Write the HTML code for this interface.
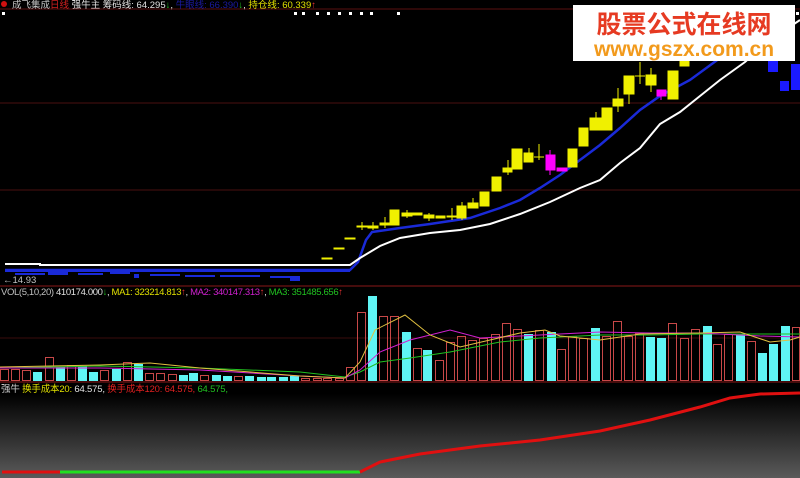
<!DOCTYPE html>
<html><head><meta charset="utf-8"><style>
html,body{margin:0;padding:0;background:#000;width:800px;height:478px;overflow:hidden}
svg{display:block}
text{font-family:"Liberation Sans","Noto Sans CJK SC",sans-serif;font-size:9.5px}
</style></head><body>
<svg width="800" height="478" viewBox="0 0 800 478" xmlns="http://www.w3.org/2000/svg">
<defs><linearGradient id="g" x1="0" y1="0" x2="0" y2="1"><stop offset="0" stop-color="#000"/><stop offset="1" stop-color="#5a5a5a"/></linearGradient></defs>
<rect width="800" height="478" fill="#000"/>
<rect x="0" y="394" width="800" height="84" fill="url(#g)"/>
<line x1="0" y1="9" x2="800" y2="9" stroke="#5a0f0f"/>
<line x1="0" y1="103" x2="800" y2="103" stroke="#4a1010"/>
<line x1="0" y1="190" x2="800" y2="190" stroke="#4a1010"/>
<line x1="0" y1="286" x2="800" y2="286" stroke="#8a1818"/>
<line x1="0" y1="338" x2="800" y2="338" stroke="#3a0c0c"/>
<line x1="0" y1="382" x2="800" y2="382" stroke="#8a1818"/>
<circle cx="4" cy="4" r="3" fill="#d01010"/>
<text x="12" y="8" textLength="304" lengthAdjust="spacing"><tspan fill="#c8c8c8">成飞集成</tspan><tspan fill="#d02020">日线 </tspan><tspan fill="#e0e0e0">强牛主 筹码线: 64.295</tspan><tspan fill="#20c020">↓</tspan><tspan fill="#e0e0e0">, </tspan><tspan fill="#1a1aa0">牛眼线: 66.390</tspan><tspan fill="#20c020">↓</tspan><tspan fill="#e0e0e0">, </tspan><tspan fill="#e0e000">持仓线: 60.339</tspan><tspan fill="#e03030">↑</tspan></text>
<g fill="#fff"><rect x="2" y="12" width="3" height="3"/><rect x="294" y="12" width="3" height="3"/><rect x="302" y="12" width="3" height="3"/><rect x="316" y="12" width="3" height="3"/><rect x="327" y="12" width="3" height="3"/><rect x="338" y="12" width="3" height="3"/><rect x="349" y="12" width="3" height="3"/><rect x="360" y="12" width="3" height="3"/><rect x="370" y="12" width="3" height="3"/><rect x="397" y="12" width="3" height="3"/><rect x="796" y="12" width="3" height="3"/></g>
<g fill="#1a2ad8">
<rect x="5" y="270" width="345" height="2"/>
<rect x="15" y="273" width="30" height="2"/><rect x="48" y="272" width="20" height="3"/><rect x="78" y="273" width="25" height="2"/><rect x="110" y="272" width="20" height="2"/><rect x="134" y="274" width="5" height="4"/><rect x="150" y="274" width="30" height="2"/><rect x="185" y="275" width="30" height="2"/><rect x="220" y="275" width="40" height="2"/><rect x="270" y="276" width="30" height="2"/><rect x="290" y="278" width="10" height="3"/>
</g>
<text x="3" y="283" fill="#c0c0c0" font-size="9">←14.93</text>
<polyline fill="none" stroke="#1a2ad8" stroke-width="2.5" points="5,270 350,270 358,262 366,240 372,232 400,228 430,224 470,218 500,208 520,200 540,188 560,175 580,160 600,145 620,128 640,110 660,96 690,80 720,58 750,38 780,20"/>
<polyline fill="none" stroke="#fff" stroke-width="2" points="5,264 40,264 40,265 350,265 360,258 380,246 400,238 430,233 460,230 490,224 520,214 550,202 580,188 600,180 620,163 640,148 660,124 680,112 700,96 720,80 745,62 770,40 800,20"/>
<g fill="#f0f000" stroke="#f0f000" stroke-width="1">
<rect x="322" y="258" width="10" height="1"/><rect x="334" y="248" width="10" height="1"/><rect x="345" y="238" width="10" height="1"/>
<rect x="357" y="226" width="10" height="1"/><line x1="362" y1="222" x2="362" y2="230"/>
<rect x="368" y="226" width="10" height="2"/><line x1="373" y1="222" x2="373" y2="230"/>
<rect x="380" y="223" width="10" height="2"/><line x1="385" y1="217" x2="385" y2="228"/>
<rect x="390" y="210" width="9" height="15"/>
<rect x="402" y="213" width="10" height="3"/><line x1="407" y1="210" x2="407" y2="218"/>
<rect x="413" y="213" width="9" height="2"/>
<rect x="424" y="215" width="10" height="3"/><line x1="429" y1="213" x2="429" y2="221"/>
<rect x="436" y="216" width="9" height="2"/>
<rect x="447" y="216" width="9" height="1"/><line x1="452" y1="208" x2="452" y2="220"/>
<rect x="457" y="206" width="9" height="12"/><line x1="462" y1="202" x2="462" y2="220"/>
<rect x="468" y="203" width="10" height="5"/><line x1="473" y1="198" x2="473" y2="208"/>
<rect x="480" y="192" width="9" height="14"/>
<rect x="492" y="177" width="9" height="14"/>
<rect x="503" y="168" width="9" height="4"/><line x1="508" y1="160" x2="508" y2="175"/>
<rect x="512" y="149" width="10" height="20"/>
<rect x="524" y="153" width="9" height="9"/><line x1="529" y1="148" x2="529" y2="153"/>
<line x1="534" y1="157" x2="544" y2="157"/><line x1="539" y1="144" x2="539" y2="160"/>
<rect x="568" y="149" width="9" height="18"/>
<rect x="579" y="128" width="9" height="18"/>
<rect x="590" y="118" width="11" height="12"/><line x1="596" y1="112" x2="596" y2="118"/>
<rect x="602" y="108" width="10" height="22"/>
<rect x="613" y="99" width="10" height="7"/><line x1="618" y1="88" x2="618" y2="112"/>
<rect x="624" y="76" width="10" height="18"/><line x1="629" y1="94" x2="629" y2="104"/>
<line x1="635" y1="76" x2="645" y2="76"/><line x1="640" y1="62" x2="640" y2="84"/>
<rect x="646" y="75" width="10" height="10"/><line x1="651" y1="68" x2="651" y2="92"/>
<rect x="668" y="71" width="10" height="28"/>
<rect x="680" y="58" width="9" height="8"/>
</g>
<g fill="#ff00ff" stroke="#ff00ff">
<rect x="546" y="155" width="9" height="15"/><line x1="550" y1="150" x2="550" y2="175"/>
<rect x="557" y="168" width="10" height="3"/>
<rect x="657" y="90" width="9" height="6"/><line x1="661" y1="96" x2="661" y2="100"/>
</g>
<g fill="#1a1aff">
<rect x="768" y="60" width="10" height="12"/><rect x="780" y="81" width="9" height="10"/><rect x="791" y="64" width="9" height="26"/>
</g>
<rect x="573" y="5" width="222" height="56" fill="#fff"/>
<text x="684" y="33" text-anchor="middle" fill="#e63a22" style="font-size:25px;font-weight:bold">股票公式在线网</text>
<text x="684" y="56" text-anchor="middle" fill="#f29a1c" style="font-size:21px;font-weight:bold">www.gszx.com.cn</text>
<text x="1" y="295" font-size="9" textLength="342" lengthAdjust="spacing"><tspan fill="#c0c0c0">VOL(5,10,20) </tspan><tspan fill="#e0e0e0">410174.000</tspan><tspan fill="#20c020">↓</tspan><tspan fill="#e0e0e0">, </tspan><tspan fill="#e0e000">MA1: 323214.813</tspan><tspan fill="#e03030">↑</tspan><tspan fill="#e0e0e0">, </tspan><tspan fill="#d020d0">MA2: 340147.313</tspan><tspan fill="#e03030">↑</tspan><tspan fill="#e0e0e0">, </tspan><tspan fill="#20c020">MA3: 351485.656</tspan><tspan fill="#e03030">↑</tspan></text>
<g fill="none" stroke="#c84848" stroke-width="1">
<rect x="0.5" y="369.5" width="8" height="11"/><rect x="11.5" y="369.5" width="8" height="11"/><rect x="22.5" y="370.5" width="8" height="10"/><rect x="45.5" y="357.5" width="8" height="23"/><rect x="67.5" y="365.5" width="8" height="15"/><rect x="100.5" y="370.5" width="8" height="10"/><rect x="123.5" y="362.5" width="8" height="18"/><rect x="145.5" y="373.5" width="8" height="7"/><rect x="156.5" y="373.5" width="8" height="7"/><rect x="168.5" y="374.5" width="8" height="6"/><rect x="200.5" y="375.5" width="8" height="5"/><rect x="234.5" y="376.5" width="8" height="4"/><rect x="301.5" y="378.5" width="8" height="2"/><rect x="313.5" y="378.5" width="8" height="2"/><rect x="323.5" y="378.5" width="8" height="2"/><rect x="335.5" y="378.5" width="8" height="2"/><rect x="346.5" y="367.5" width="8" height="13"/>
<rect x="357.5" y="312.5" width="8" height="68"/><rect x="379.5" y="316.5" width="8" height="64"/><rect x="390.5" y="316.5" width="8" height="64"/><rect x="413.5" y="348.5" width="8" height="32"/><rect x="435.5" y="360.5" width="8" height="20"/><rect x="446.5" y="342.5" width="8" height="38"/><rect x="457.5" y="336.5" width="8" height="44"/><rect x="468.5" y="340.5" width="8" height="40"/><rect x="479.5" y="338.5" width="8" height="42"/><rect x="491.5" y="334.5" width="8" height="46"/><rect x="502.5" y="323.5" width="8" height="57"/><rect x="513.5" y="329.5" width="8" height="51"/><rect x="535.5" y="330.5" width="8" height="50"/><rect x="557.5" y="349.5" width="8" height="31"/><rect x="568.5" y="336.5" width="8" height="44"/><rect x="579.5" y="338.5" width="8" height="42"/><rect x="602.5" y="336.5" width="8" height="44"/><rect x="613.5" y="321.5" width="8" height="59"/><rect x="624.5" y="336.5" width="8" height="44"/><rect x="635.5" y="333.5" width="8" height="47"/><rect x="668.5" y="323.5" width="8" height="57"/><rect x="680.5" y="338.5" width="8" height="42"/><rect x="691.5" y="329.5" width="8" height="51"/><rect x="713.5" y="344.5" width="8" height="36"/><rect x="724.5" y="334.5" width="8" height="46"/><rect x="747.5" y="341.5" width="8" height="39"/><rect x="792.5" y="327.5" width="7" height="53"/>
</g>
<g fill="#5ff5f5">
<rect x="33" y="372" width="9" height="9"/><rect x="56" y="367" width="9" height="14"/><rect x="78" y="366" width="9" height="15"/><rect x="89" y="372" width="9" height="9"/><rect x="112" y="369" width="9" height="12"/><rect x="134" y="364" width="9" height="17"/><rect x="179" y="375" width="9" height="6"/><rect x="189" y="373" width="9" height="8"/><rect x="212" y="375" width="9" height="6"/><rect x="223" y="376" width="9" height="5"/><rect x="245" y="376" width="9" height="5"/><rect x="257" y="377" width="9" height="4"/><rect x="267" y="377" width="9" height="4"/><rect x="279" y="377" width="9" height="4"/><rect x="290" y="376" width="9" height="5"/>
<rect x="368" y="296" width="9" height="85"/><rect x="402" y="332" width="9" height="49"/><rect x="423" y="350" width="9" height="31"/><rect x="524" y="334" width="9" height="47"/><rect x="547" y="332" width="9" height="49"/><rect x="591" y="328" width="9" height="53"/><rect x="646" y="337" width="9" height="44"/><rect x="657" y="338" width="9" height="43"/><rect x="703" y="326" width="9" height="55"/><rect x="736" y="334" width="9" height="47"/><rect x="758" y="353" width="9" height="28"/><rect x="769" y="344" width="9" height="37"/><rect x="781" y="326" width="9" height="55"/>
</g>
<polyline fill="none" stroke="#20c020" stroke-width="1" points="0,368 100,366 200,368 300,372 345,377 360,372 380,362 410,358 450,352 500,342 540,338 600,335 650,335 700,334 760,334 800,334"/>
<polyline fill="none" stroke="#d020d0" stroke-width="1" points="0,368 100,368 200,370 300,376 345,378 360,370 380,352 410,340 450,330 480,338 520,336 560,334 600,332 650,333 700,333 760,336 800,337"/>
<polyline fill="none" stroke="#e0c040" stroke-width="1" points="0,367 100,365 150,363 200,368 300,376 345,378 360,362 375,330 405,315 430,335 460,347 490,340 520,333 545,330 560,336 600,340 640,334 700,333 740,332 770,342 790,340 800,337"/>
<text x="1" y="392" textLength="227" lengthAdjust="spacing"><tspan fill="#c8c8c8">强牛 </tspan><tspan fill="#e0e000">换手成本20: </tspan><tspan fill="#e0e0e0">64.575, </tspan><tspan fill="#e02020">换手成本120: 64.575, </tspan><tspan fill="#20c020">64.575,</tspan></text>
<line x1="2" y1="472" x2="60" y2="472" stroke="#e01010" stroke-width="3"/>
<line x1="60" y1="472" x2="360" y2="472" stroke="#20e020" stroke-width="3"/>
<polyline fill="none" stroke="#e01010" stroke-width="3" points="360,472 380,462 420,454 480,446 540,440 600,431 650,420 700,407 730,398 760,394 800,393"/>
</svg>
</body></html>
